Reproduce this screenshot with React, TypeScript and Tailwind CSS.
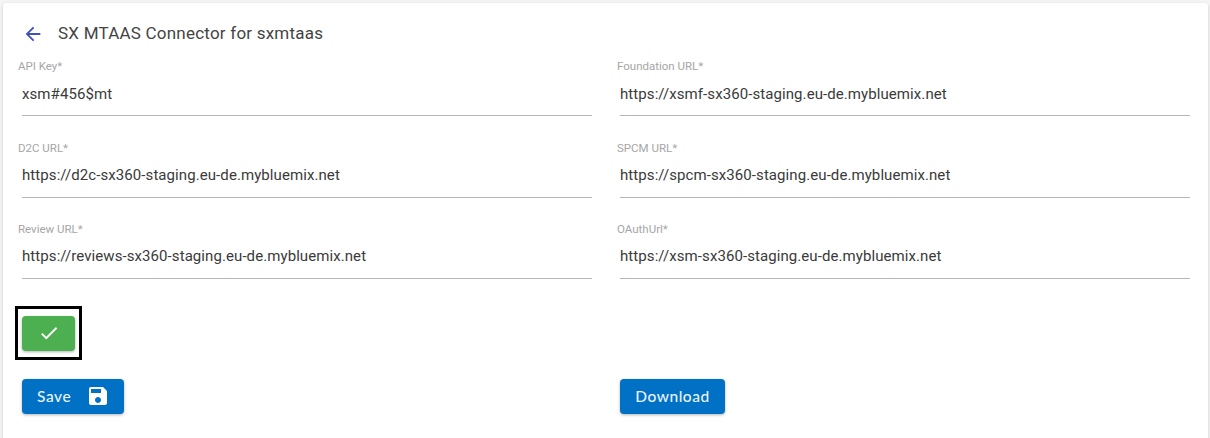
const fieldRows = [
  [
    { label: "API Key*", value: "xsm#456$mt" },
    { label: "Foundation URL*", value: "https://xsmf-sx360-staging.eu-de.mybluemix.net" },
  ],
  [
    { label: "D2C URL*", value: "https://d2c-sx360-staging.eu-de.mybluemix.net" },
    { label: "SPCM URL*", value: "https://spcm-sx360-staging.eu-de.mybluemix.net" },
  ],
  [
    { label: "Review URL*", value: "https://reviews-sx360-staging.eu-de.mybluemix.net" },
    { label: "OAuthUrl*", value: "https://xsm-sx360-staging.eu-de.mybluemix.net" },
  ],
];

function Field({ label, value, left }: { label: string; value: string; left: boolean }) {
  return (
    <div className="h-[81.4px] w-[570px] shrink-0">
      <div className={left ? "ml-[-4px] h-[13px] pt-[2px] text-[11.5px] leading-[13px] text-[#a6a6a6]" : "ml-[-3px] h-[13px] pt-[2px] text-[11.5px] leading-[13px] text-[#a6a6a6]"}>{label}</div>
      <div className="h-[44px] border-b border-[#b5b5b5] box-content">
        <div className="pt-[12.2px] text-[15px] leading-[20px] tracking-[0.08px] text-[#3a3a3a]">{value}</div>
      </div>
    </div>
  );
}

export default function App() {
  return (
    <div className="h-[438px] w-[1210px] overflow-hidden bg-[#f4f4f4] pl-[3px] pr-[2px] pt-[3px] font-['Roboto',sans-serif]">
      <div className="h-[440px] rounded-[3px] bg-white pl-[19px] pr-[16px] shadow-[0_1px_3px_rgba(0,0,0,0.18)]">
        <div className="flex h-[54px] items-center pb-[1px] pt-[7px]">
          <svg width="22" height="22" viewBox="0 0 24 24" className="mt-[1px]" fill="#3f51b5">
            <path d="M20 11H7.83l5.59-5.59L12 4l-8 8 8 8 1.41-1.41L7.83 13H20v-2z" />
          </svg>
          <h1 className="ml-[14px] text-[17px] font-normal leading-6 tracking-[0.22px] text-[#444444]">SX MTAAS Connector for sxmtaas</h1>
        </div>
        <div className="mt-[1.4px] flex flex-col">
          {fieldRows.map((row) => (
            <div key={row[0].label} className="flex gap-[28px]">
              {row.map((f, i) => (
                <Field key={f.label} label={f.label} value={f.value} left={i === 0} />
              ))}
            </div>
          ))}
        </div>
        <div className="ml-[-7px] mt-[3.4px] flex h-[54px] w-[67px] items-center justify-center border-[3px] border-black">
          <button className="mt-[1px] flex h-[35px] w-[53px] items-center justify-center rounded-[4px] bg-[#4caf50] shadow-[0_1px_3px_rgba(0,0,0,0.3)]">
            <svg width="22" height="22" viewBox="0 0 24 24" fill="#ffffff">
              <path d="M9 16.17L4.83 12l-1.42 1.41L9 19 21 7l-1.41-1.41z" />
            </svg>
          </button>
        </div>
        <div className="mt-[19px] flex gap-[28px]">
          <div className="w-[570px] shrink-0">
            <button className="flex h-[35px] w-[102px] items-center rounded-[4px] bg-[#0071c5] pl-[15px] font-['Lato',sans-serif] text-[15.5px] font-medium tracking-[0.6px] text-[#e8f2fa] shadow-[0_1px_3px_rgba(0,0,0,0.3)]">
              Save
              <svg width="24" height="24" viewBox="0 0 24 24" fill="#ffffff" className="ml-[15px]">
                <path d="M17 3H5c-1.11 0-2 .9-2 2v14c0 1.1.89 2 2 2h14c1.1 0 2-.9 2-2V7l-4-4zm-5 16c-1.66 0-3-1.34-3-3s1.34-3 3-3 3 1.34 3 3-1.34 3-3 3zm3-10H5V5h10v4z" />
              </svg>
            </button>
          </div>
          <button className="h-[35px] w-[105px] rounded-[4px] bg-[#0071c5] font-['Lato',sans-serif] text-[15.5px] font-medium tracking-[0.5px] text-[#e8f2fa] shadow-[0_1px_3px_rgba(0,0,0,0.3)]">
            Download
          </button>
        </div>
      </div>
    </div>
  );
}
